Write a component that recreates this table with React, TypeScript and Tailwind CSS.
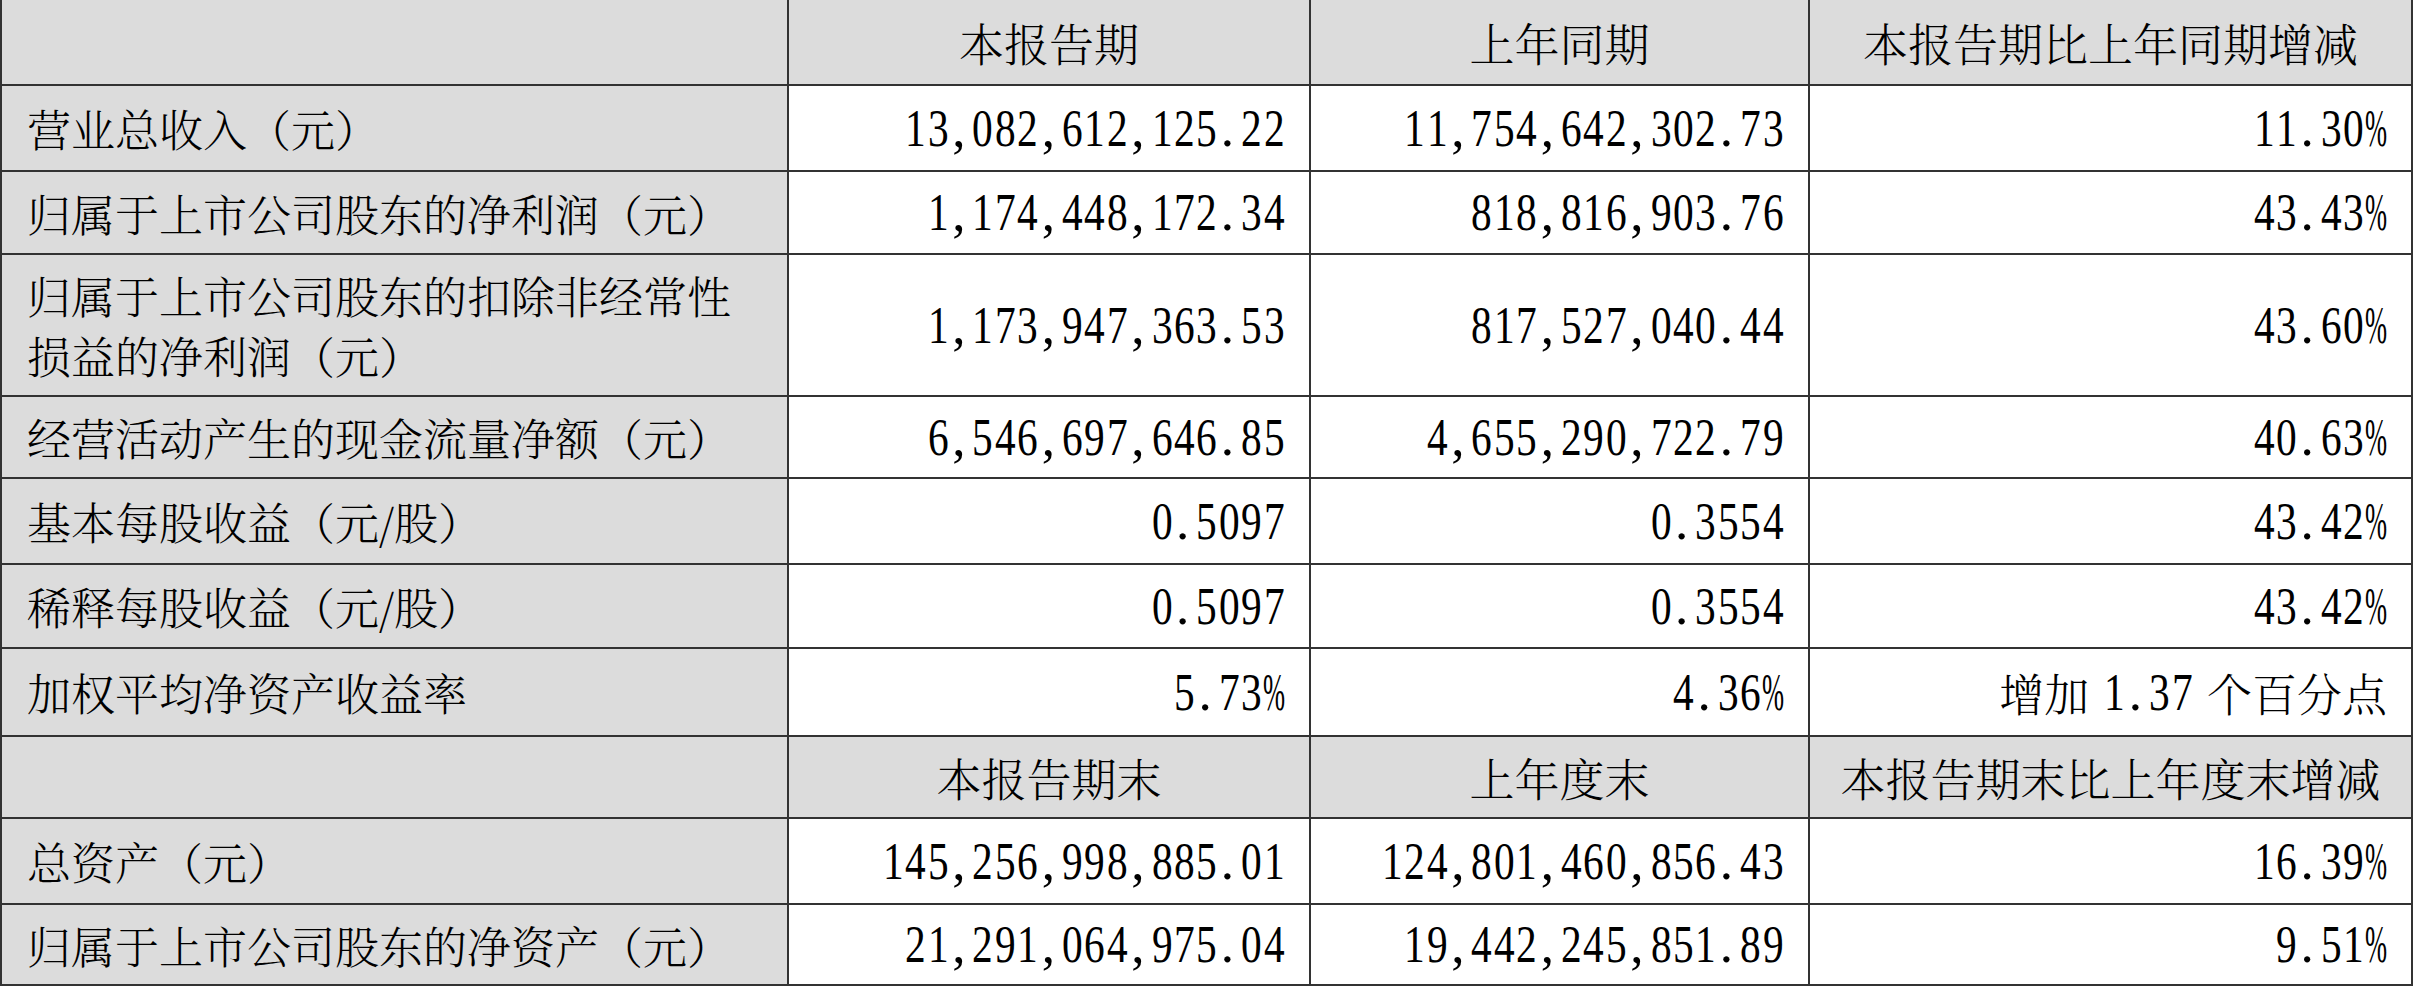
import React from 'react';

const cjk = "font-['Noto_Serif_CJK_SC','Noto_Sans_CJK_SC',serif] font-light";

// SimSun-like half-width cells: every latin char takes the same slot
const Num: React.FC<{ text: string }> = ({ text }) => {
  return (
    <span className="inline-flex items-center leading-none">
      {text.split('').map((ch, i) => {
        if (ch.charCodeAt(0) > 255) {
          return (
            <span key={i} className={`${cjk} text-[45px] leading-none`}>
              {ch}
            </span>
          );
        }
        if (ch === ' ') return <span key={i} className="inline-block w-[14px]" />;
        if (ch === ',' || ch === '.') {
          return (
            <span key={i} className="flex w-[22.4px] justify-start pl-[3px]">
              <span className="inline-block font-['Liberation_Serif',serif] text-[53px] leading-none">{ch}</span>
            </span>
          );
        }
        if (ch === '%') {
          return (
            <span key={i} className="flex w-[22.4px] justify-center">
              <span className="inline-block scale-x-[0.5] font-['Liberation_Serif',serif] text-[53px] leading-none">%</span>
            </span>
          );
        }
        return (
          <span key={i} className="flex w-[22.4px] justify-center">
            <span className="inline-block scale-x-[0.78] font-['Liberation_Serif',serif] text-[53px] leading-none">{ch}</span>
          </span>
        );
      })}
    </span>
  );
};

const Label: React.FC<{ children: React.ReactNode }> = ({ children }) => (
  <div className={`flex items-center bg-[#dcdcdc] pl-[25px] ${cjk} text-[44px] leading-[60px] text-black`}>
    {children}
  </div>
);

const Head: React.FC<{ text?: string }> = ({ text }) => (
  <div className={`flex items-center justify-center bg-[#dcdcdc] ${cjk} text-[45px] leading-none text-black`}>
    {text}
  </div>
);

const Val: React.FC<{ text: string }> = ({ text }) => (
  <div className="flex items-center justify-end bg-white pr-[24px] text-black">
    <Num text={text} />
  </div>
);

const rows: [React.ReactNode, string, string, string][] = [
  ['营业总收入（元）', '13,082,612,125.22', '11,754,642,302.73', '11.30%'],
  ['归属于上市公司股东的净利润（元）', '1,174,448,172.34', '818,816,903.76', '43.43%'],
  [
    <>
      归属于上市公司股东的扣除非经常性
      <br />
      损益的净利润（元）
    </>,
    '1,173,947,363.53',
    '817,527,040.44',
    '43.60%',
  ],
  ['经营活动产生的现金流量净额（元）', '6,546,697,646.85', '4,655,290,722.79', '40.63%'],
  ['基本每股收益（元/股）', '0.5097', '0.3554', '43.42%'],
  ['稀释每股收益（元/股）', '0.5097', '0.3554', '43.42%'],
  ['加权平均净资产收益率', '5.73%', '4.36%', '增加 1.37 个百分点'],
];

const rows2: [string, string, string, string][] = [
  ['总资产（元）', '145,256,998,885.01', '124,801,460,856.43', '16.39%'],
  ['归属于上市公司股东的净资产（元）', '21,291,064,975.04', '19,442,245,851.89', '9.51%'],
];

export default function App() {
  return (
    <div className="min-h-screen w-[2413px] bg-white">
      <div className="grid w-[2413px] grid-cols-[785px_520px_497px_601px] grid-rows-[84px_84px_81px_140px_80px_84px_82px_86px_80px_84px_79px] gap-[2px] bg-[#333333] px-[2px] pb-[2px]">
        <Head />
        <Head text="本报告期" />
        <Head text="上年同期" />
        <Head text="本报告期比上年同期增减" />
        {rows.map((r, i) => (
          <React.Fragment key={i}>
            <Label>{r[0]}</Label>
            <Val text={r[1]} />
            <Val text={r[2]} />
            <Val text={r[3]} />
          </React.Fragment>
        ))}
        <Head />
        <Head text="本报告期末" />
        <Head text="上年度末" />
        <Head text="本报告期末比上年度末增减" />
        {rows2.map((r, i) => (
          <React.Fragment key={i}>
            <Label>{r[0]}</Label>
            <Val text={r[1]} />
            <Val text={r[2]} />
            <Val text={r[3]} />
          </React.Fragment>
        ))}
      </div>
    </div>
  );
}
